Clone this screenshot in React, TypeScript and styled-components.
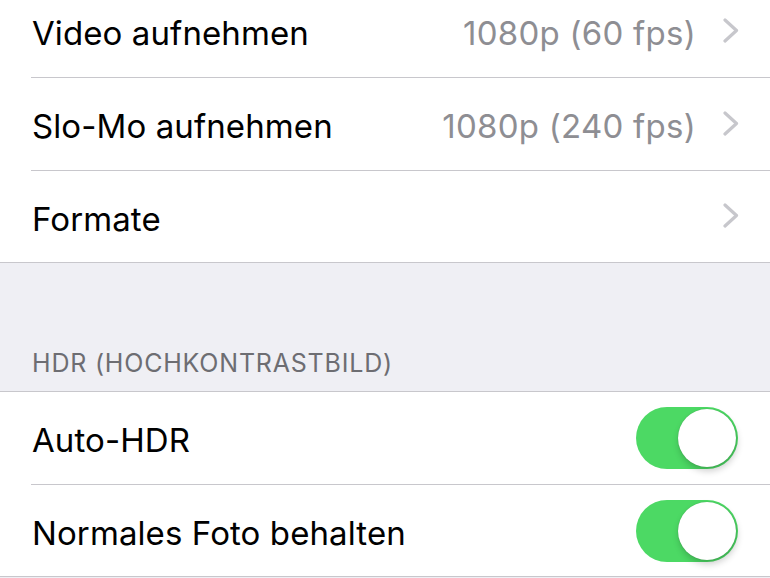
import React from "react";
import styled, { createGlobalStyle } from "styled-components";

const Global = createGlobalStyle`
  html, body { margin: 0; padding: 0; background: #efeff4; }
  body { font-family: Inter, "Noto Sans", sans-serif; -webkit-font-smoothing: antialiased; }
  #root { width: 770px; height: 578px; overflow: hidden; }
`;

const Page = styled.div`
  margin-top: -15px;
  display: flex;
  flex-direction: column;
`;

const Group = styled.div<{ $top?: boolean }>`
  background: #ffffff;
  border-bottom: 1px solid #c8c7cc;
  border-top: ${(p) => (p.$top ? "1px solid #c8c7cc" : "none")};
  display: flex;
  flex-direction: column;
`;

const Row = styled.div<{ $last?: boolean }>`
  height: ${(p) => (p.$last ? "91px" : "92px")};
  margin-left: 31px;
  display: flex;
  align-items: center;
  box-sizing: content-box;
  border-bottom: ${(p) => (p.$last ? "none" : "1px solid #c8c7cc")};
`;

const RowContent = styled.div`
  flex: 1;
  display: flex;
  align-items: center;
  padding-top: 4px;
`;

const Label = styled.span`
  flex: 1;
  font-size: 33px;
  color: #000;
  padding-left: 1px;
  letter-spacing: 0.1px;
`;

const Value = styled.span`
  font-size: 33px;
  color: #8e8e93;
  letter-spacing: 0.25px;
  margin-right: 27px;
`;

const ChevronWrap = styled.span`
  width: 17px;
  margin-right: 30px;
  display: flex;
  align-items: center;
  margin-top: -6px;
`;

const Header = styled.div`
  height: 128px;
  display: flex;
  align-items: flex-end;
  padding: 0 0 13px 32px;
  box-sizing: border-box;
  font-size: 25px;
  color: #6d6d72;
  letter-spacing: 0.8px;
`;

const Track = styled.span`
  width: 102px;
  height: 62px;
  border-radius: 31px;
  background: #4cd964;
  margin-right: 32px;
  margin-top: -4px;
  display: flex;
  align-items: center;
  justify-content: flex-end;
  padding-right: 2px;
  box-sizing: border-box;
`;

const Knob = styled.span`
  width: 58px;
  height: 58px;
  border-radius: 50%;
  background: #fff;
  box-shadow: 1px 4px 7px rgba(0, 0, 0, 0.2), 0 0 1px rgba(0, 0, 0, 0.25);
`;

const Chevron = () => (
  <ChevronWrap>
    <svg width="16" height="25" viewBox="0 0 16 25">
      <path d="M2 2 L13.5 12.5 L2 23" fill="none" stroke="#c7c7cc" strokeWidth="3.2" strokeLinecap="round" strokeLinejoin="round" />
    </svg>
  </ChevronWrap>
);

const Toggle = () => (
  <Track>
    <Knob />
  </Track>
);

export default function App() {
  return (
    <>
      <Global />
      <Page>
        <Group>
          <Row>
            <RowContent>
              <Label>Video aufnehmen</Label>
              <Value>1080p (60 fps)</Value>
              <Chevron />
            </RowContent>
          </Row>
          <Row>
            <RowContent>
              <Label>Slo-Mo aufnehmen</Label>
              <Value>1080p (240 fps)</Value>
              <Chevron />
            </RowContent>
          </Row>
          <Row $last>
            <RowContent>
              <Label>Formate</Label>
              <Chevron />
            </RowContent>
          </Row>
        </Group>
        <Header>HDR (HOCHKONTRASTBILD)</Header>
        <Group $top>
          <Row>
            <RowContent>
              <Label>Auto-HDR</Label>
              <Toggle />
            </RowContent>
          </Row>
          <Row $last>
            <RowContent>
              <Label>Normales Foto behalten</Label>
              <Toggle />
            </RowContent>
          </Row>
        </Group>
      </Page>
    </>
  );
}
